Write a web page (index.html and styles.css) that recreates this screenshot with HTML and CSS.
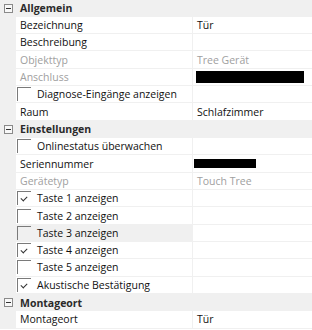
FILE: index.html
```html
<!DOCTYPE html>
<html>
<head>
<meta charset="utf-8">
<link rel="stylesheet" href="styles.css">
</head>
<body>
<div class="grid">
  <div class="row cat"><span class="gut"><span class="exp"></span></span><span class="catname">Allgemein</span></div>
  <div class="row"><span class="gut"></span><span class="name">Bezeichnung</span><span class="val">Tür</span></div>
  <div class="row"><span class="gut"></span><span class="name">Beschreibung</span><span class="val"></span></div>
  <div class="row dis"><span class="gut"></span><span class="name">Objekttyp</span><span class="val">Tree Gerät</span></div>
  <div class="row dis"><span class="gut"></span><span class="name">Anschluss</span><span class="val"><span class="redact r1"></span></span></div>
  <div class="row"><span class="gut"></span><span class="name"><span class="cb"></span>Diagnose-Eingänge anzeigen</span><span class="val"></span></div>
  <div class="row"><span class="gut"></span><span class="name">Raum</span><span class="val">Schlafzimmer</span></div>
  <div class="row cat"><span class="gut"><span class="exp"></span></span><span class="catname">Einstellungen</span></div>
  <div class="row"><span class="gut"></span><span class="name"><span class="cb"></span>Onlinestatus überwachen</span><span class="val"></span></div>
  <div class="row"><span class="gut"></span><span class="name">Seriennummer</span><span class="val"><span class="redact r2"></span></span></div>
  <div class="row dis"><span class="gut"></span><span class="name">Gerätetyp</span><span class="val">Touch Tree</span></div>
  <div class="row"><span class="gut"></span><span class="name"><span class="cb on"></span>Taste 1 anzeigen</span><span class="val"></span></div>
  <div class="row"><span class="gut"></span><span class="name"><span class="cb"></span>Taste 2 anzeigen</span><span class="val"></span></div>
  <div class="row sel"><span class="gut"></span><span class="name"><span class="cb"></span>Taste 3 anzeigen</span><span class="val"></span></div>
  <div class="row"><span class="gut"></span><span class="name"><span class="cb on"></span>Taste 4 anzeigen</span><span class="val"></span></div>
  <div class="row"><span class="gut"></span><span class="name"><span class="cb"></span>Taste 5 anzeigen</span><span class="val"></span></div>
  <div class="row"><span class="gut"></span><span class="name"><span class="cb on"></span>Akustische Bestätigung</span><span class="val"></span></div>
  <div class="row cat"><span class="gut"><span class="exp"></span></span><span class="catname">Montageort</span></div>
  <div class="row"><span class="gut"></span><span class="name">Montageort</span><span class="val">Tür</span></div>
</div>
</body>
</html>
```
FILE: styles.css
```css
html, body {
  margin: 0;
  padding: 0;
  background: #ffffff;
}
body {
  font-family: "Open Sans", "Noto Sans", sans-serif;
  font-size: 10.5px;
  color: #111;
  overflow: hidden;
}
.grid {
  width: 312px;
  margin-top: -0.6px;
  display: flex;
  flex-direction: column;
}
.row {
  height: 17.33px;
  box-sizing: border-box;
  display: grid;
  grid-template-columns: 16px 177px 1fr;
  align-items: stretch;
}
.gut {
  background: #f0f0f0;
  display: flex;
  align-items: center;
  justify-content: center;
}
.name, .val {
  display: flex;
  align-items: center;
  border-bottom: 1px solid #f0f0f0;
  white-space: nowrap;
  overflow: hidden;
}
.name {
  padding-left: 4px;
  border-right: 1px solid #f0f0f0;
}
.val {
  padding-left: 4px;
}
.cat {
  background: #f0f0f0;
}
.catname {
  grid-column: 2 / 4;
  padding-left: 4px;
  font-weight: bold;
  color: #2a2a2a;
  display: flex;
  align-items: center;
}
.exp {
  width: 9px;
  height: 9px;
  box-sizing: border-box;
  border: 1px solid #8a8a8a;
  position: relative;
  background: #f8f8f8;
}
.exp::after {
  content: "";
  position: absolute;
  left: 1px;
  right: 1px;
  top: 3px;
  height: 1px;
  background: #333;
}
.dis .name, .dis .val {
  color: #a0a0a0;
}
.sel .name {
  background: #f0f0f0;
}
.cb {
  width: 14px;
  height: 14px;
  box-sizing: border-box;
  border-top: 1px solid #7a7a7a;
  border-left: 1px solid #7a7a7a;
  margin-left: -3px;
  margin-right: 6px;
  position: relative;
  flex: none;
}
.cb.on::after {
  content: "";
  position: absolute;
  left: 3px;
  top: 4px;
  width: 5px;
  height: 3px;
  border-left: 1px solid #333;
  border-bottom: 1px solid #333;
  transform: rotate(-45deg);
}
.redact {
  display: block;
  background: #000;
}
.r1 {
  width: 108px;
  height: 12px;
  margin-left: -1px;
}
.r2 {
  width: 62px;
  height: 9px;
  margin-left: -3px;
}
```
